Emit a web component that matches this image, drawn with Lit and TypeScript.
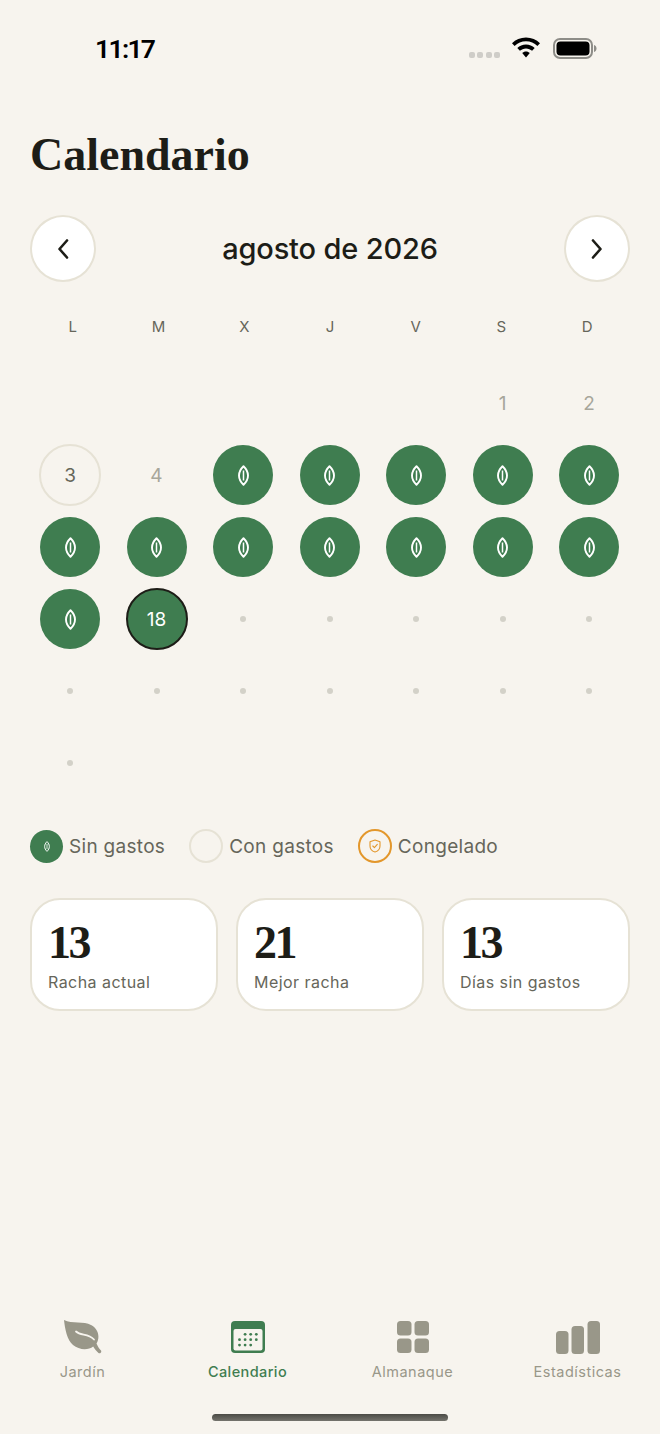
import { LitElement, html, css, svg } from "lit";
import { customElement } from "lit/decorators.js";

const leaf = (w: number, h: number) => html`<svg class="leaf" width=${w} height=${h} viewBox="0 0 11 21" fill="none" stroke="#fff" stroke-width="1.9" stroke-linejoin="round"><path d="M5.5 1.2C2.6 4 1 7.2 1 10.5S2.6 17 5.5 19.8C8.4 17 10 13.8 10 10.5S8.4 4 5.5 1.2Z"/><path d="M5.5 5.5V15.5" stroke-width="1.5"/></svg>`;

type Cell = { k: "blank" | "num" | "ring" | "done" | "today" | "dot"; n?: number };
const c = (k: Cell["k"], n?: number): Cell => ({ k, n });
const cells: Cell[] = [
  ...Array(5).fill(c("blank")), c("num", 1), c("num", 2),
  c("ring", 3), c("num", 4), ...Array(5).fill(c("done")),
  ...Array(7).fill(c("done")),
  c("done"), c("today", 18), ...Array(5).fill(c("dot")),
  ...Array(7).fill(c("dot")),
  c("dot"),
];

@customElement("app-root")
export class AppRoot extends LitElement {
  static styles = css`
    :host { display: flex; flex-direction: column; width: 660px; height: 1434px; background: #f7f4ee; font-family: Inter, sans-serif; color: #1d1d17; overflow: hidden; }
    .status { height: 96px; display: flex; justify-content: space-between; box-sizing: border-box; padding: 34px 63px 0 95px; }
    .time { font: 600 26.5px/30px Roboto, Inter, sans-serif; color: #000; letter-spacing: -1.7px; }
    .sys { display: flex; align-items: flex-start; margin-top: -1px; }
    .signal { display: flex; gap: 2.5px; margin: 19px 11px 0 0; }
    .signal i { width: 6px; height: 6px; border-radius: 2px; background: #cfcdc8; }
    .wifi { margin: 4px 12px 0 0; }
    .battery { margin-top: 5px; }
    main { padding: 0 30px; display: flex; flex-direction: column; }
    h1 { margin: 33px 0 0; font: 700 46px/52px "Liberation Serif", serif; color: #1d1d17; }
    .month { display: flex; justify-content: space-between; align-items: center; margin-top: 34px; }
    .nav { width: 66px; height: 67px; box-sizing: border-box; border-radius: 50%; background: #fff; border: 2px solid #e6e2d5; display: flex; align-items: center; justify-content: center; }
    .mtitle { font-size: 29px; font-weight: 550; line-height: 40px; letter-spacing: -0.15px; }
    .week { display: grid; grid-template-columns: repeat(7, 1fr); margin-top: 35px; font-size: 15px; line-height: 20px; color: #66665a; text-align: center; }
    .days { display: grid; grid-template-columns: repeat(7, 86.5px); grid-auto-rows: 72px; margin: 30px 0 0 -3.25px; }
    .cell { display: flex; align-items: center; justify-content: center; font-size: 19px; }
    .num { color: #a7a69b; }
    .circle { width: 60px; height: 60px; box-sizing: border-box; border-radius: 50%; display: flex; align-items: center; justify-content: center; }
    .ring { border: 2.5px solid #e6e2d5; color: #66665a; width: 62px; height: 62px; }
    .done { background: #3f7d50; }
    .today { background: #3f7d50; color: #fff; border: 2.5px solid #1d1d17; width: 62px; height: 62px; }
    .dot { width: 6px; height: 6px; border-radius: 50%; background: #d3d1c8; }
    .legend { display: flex; align-items: center; margin-top: 30px; font-size: 19px; letter-spacing: 0.3px; color: #66665a; }
    .legend .item { display: flex; align-items: center; gap: 6px; margin-right: 24px; }
    .lc { width: 33px; height: 33px; box-sizing: border-box; border-radius: 50%; display: flex; align-items: center; justify-content: center; }
    .lc.g { background: #3f7d50; }
    .lc.e { width: 34px; height: 34px; border: 2.5px solid #e6e2d5; }
    .lc.o { width: 34px; height: 34px; border: 2.5px solid #e3972b; }
    .cards { display: grid; grid-template-columns: repeat(3, 188px); gap: 18px; margin-top: 35px; }
    .card { height: 113px; box-sizing: border-box; border: 2px solid #e6e2d5; border-radius: 30px; background: #fff; padding: 16px 16px 0; }
    .big { font: 700 46px/54px "Liberation Serif", serif; letter-spacing: -2.5px; color: #1d1d17; }
    .lab { font-size: 16px; line-height: 24px; letter-spacing: 0.45px; color: #66665a; }
    .spacer { flex: 1; }
    .tabs { display: grid; grid-template-columns: repeat(4, 165px); height: 94px; }
    .tab { display: flex; flex-direction: column; align-items: center; font-size: 14.5px; letter-spacing: 0.5px; color: #999789; }
    .tab.on { color: #3f7d50; font-weight: 500; letter-spacing: 0.4px; }
    .ic { height: 34px; display: flex; align-items: center; }
    .tab span { margin-top: 8px; line-height: 20px; }
    .homewrap { height: 20px; display: flex; justify-content: center; }
    .home { width: 236px; height: 7px; border-radius: 4px; background: linear-gradient(#4b4b46, #74736c); }
  `;

  cell(x: Cell) {
    switch (x.k) {
      case "blank": return html`<div class="cell"></div>`;
      case "num": return html`<div class="cell num">${x.n}</div>`;
      case "ring": return html`<div class="cell"><div class="circle ring">${x.n}</div></div>`;
      case "done": return html`<div class="cell"><div class="circle done">${leaf(11, 21)}</div></div>`;
      case "today": return html`<div class="cell"><div class="circle today">${x.n}</div></div>`;
      default: return html`<div class="cell"><div class="dot"></div></div>`;
    }
  }

  render() {
    const dots = [];
    for (let y = 0; y < 3; y++) for (let xx = 0; xx < 4; xx++) {
      if (y === 0 && xx === 0) continue;
      if (y === 2 && xx === 3) continue;
      dots.push(svg`<circle cx=${8.5 + xx * 5.6} cy=${13.3 + y * 5.4} r="1.4" fill="#3f7d50"/>`);
    }
    return html`
      <div class="status">
        <div class="time">11:17</div>
        <div class="sys">
          <div class="signal"><i></i><i></i><i></i><i></i></div>
          <svg class="wifi" width="30" height="22" viewBox="0 0 30 22"><path d="M15 0.5C9.5 0.5 4.6 2.7 1 6.2L3.6 9C6.6 6.1 10.6 4.3 15 4.3S23.4 6.1 26.4 9L29 6.2C25.4 2.7 20.5 0.5 15 0.5Z M15 7.6C11.6 7.6 8.6 8.9 6.3 11.1L8.9 13.8C10.5 12.3 12.6 11.4 15 11.4S19.5 12.3 21.1 13.8L23.7 11.1C21.4 8.9 18.4 7.6 15 7.6Z M15 14.6C13.5 14.6 12.2 15.2 11.2 16.1L15 20.6L18.8 16.1C17.8 15.2 16.5 14.6 15 14.6Z" fill="#000"/></svg>
          <svg class="battery" width="44" height="21" viewBox="0 0 44 21"><rect x="1" y="1" width="38" height="19" rx="6" fill="none" stroke="#8e8d88" stroke-width="2"/><rect x="3.5" y="3.5" width="33" height="14" rx="4" fill="#000"/><path d="M41 7c1.6.4 2.5 1.8 2.5 3.5S42.6 13.6 41 14Z" fill="#8e8d88"/></svg>
        </div>
      </div>
      <main>
        <h1>Calendario</h1>
        <div class="month">
          <div class="nav"><svg width="14" height="22" viewBox="0 0 14 22" fill="none" stroke="#1d1d17" stroke-width="2.6" stroke-linecap="round" stroke-linejoin="round"><path d="M11 2.5L3.5 11L11 19.5"/></svg></div>
          <div class="mtitle">agosto de 2026</div>
          <div class="nav"><svg width="14" height="22" viewBox="0 0 14 22" fill="none" stroke="#1d1d17" stroke-width="2.6" stroke-linecap="round" stroke-linejoin="round"><path d="M3 2.5L10.5 11L3 19.5"/></svg></div>
        </div>
        <div class="week">${["L","M","X","J","V","S","D"].map(d => html`<div>${d}</div>`)}</div>
        <div class="days">${cells.map(x => this.cell(x))}</div>
        <div class="legend">
          <div class="item"><div class="lc g">${leaf(6, 11)}</div>Sin gastos</div>
          <div class="item"><div class="lc e"></div>Con gastos</div>
          <div class="item"><div class="lc o"><svg width="12" height="14" viewBox="0 0 12 14" fill="none" stroke="#e3972b" stroke-width="1.1" stroke-linecap="round" stroke-linejoin="round"><path d="M6 1L11 2.8V7C11 10 8.8 12.2 6 13C3.2 12.2 1 10 1 7V2.8Z"/><path d="M3.8 7L5.4 8.6L8.3 5.4"/></svg></div>Congelado</div>
        </div>
        <div class="cards">
          <div class="card"><div class="big">13</div><div class="lab">Racha actual</div></div>
          <div class="card"><div class="big">21</div><div class="lab">Mejor racha</div></div>
          <div class="card"><div class="big">13</div><div class="lab">Días sin gastos</div></div>
        </div>
      </main>
      <div class="spacer"></div>
      <div class="tabs">
        <div class="tab"><div class="ic"><svg width="38" height="34" viewBox="0 0 38 34"><path d="M0 0C8 4 20 1 27 5C35 9 36 18 32.5 23.5C33.5 26 35 28.5 37 30.5C38 32 36 34.2 34.5 33C32.5 31.3 30.5 28.8 29.2 26.5C24 30.5 15 30 9 25C3 20 1 9 0 0Z" fill="#999789"/><path d="M12 11.5C17 16 24 13 30 19.5" fill="none" stroke="#f7f4ee" stroke-width="1.8" stroke-linecap="round"/></svg></div><span>Jardín</span></div>
        <div class="tab on"><div class="ic"><svg width="34" height="32" viewBox="0 0 34 32"><rect width="34" height="32" rx="4" fill="#3f7d50"/><rect x="2.5" y="8" width="29" height="21.5" rx="2" fill="#f7f4ee"/>${dots}</svg></div><span>Calendario</span></div>
        <div class="tab"><div class="ic"><svg width="32" height="32" viewBox="0 0 32 32" fill="#999789"><rect width="14.5" height="14.5" rx="3.5"/><rect x="17.5" width="14.5" height="14.5" rx="3.5"/><rect y="17.5" width="14.5" height="14.5" rx="3.5"/><rect x="17.5" y="17.5" width="14.5" height="14.5" rx="3.5"/></svg></div><span>Almanaque</span></div>
        <div class="tab"><div class="ic"><svg width="44" height="33" viewBox="0 0 44 33" fill="#999789"><rect y="10" width="12.5" height="23" rx="3.5"/><rect x="15.5" y="5" width="12.5" height="28" rx="3.5"/><rect x="31.5" width="12.5" height="33" rx="3.5"/></svg></div><span>Estadísticas</span></div>
      </div>
      <div class="homewrap"><div class="home"></div></div>
    `;
  }
}
